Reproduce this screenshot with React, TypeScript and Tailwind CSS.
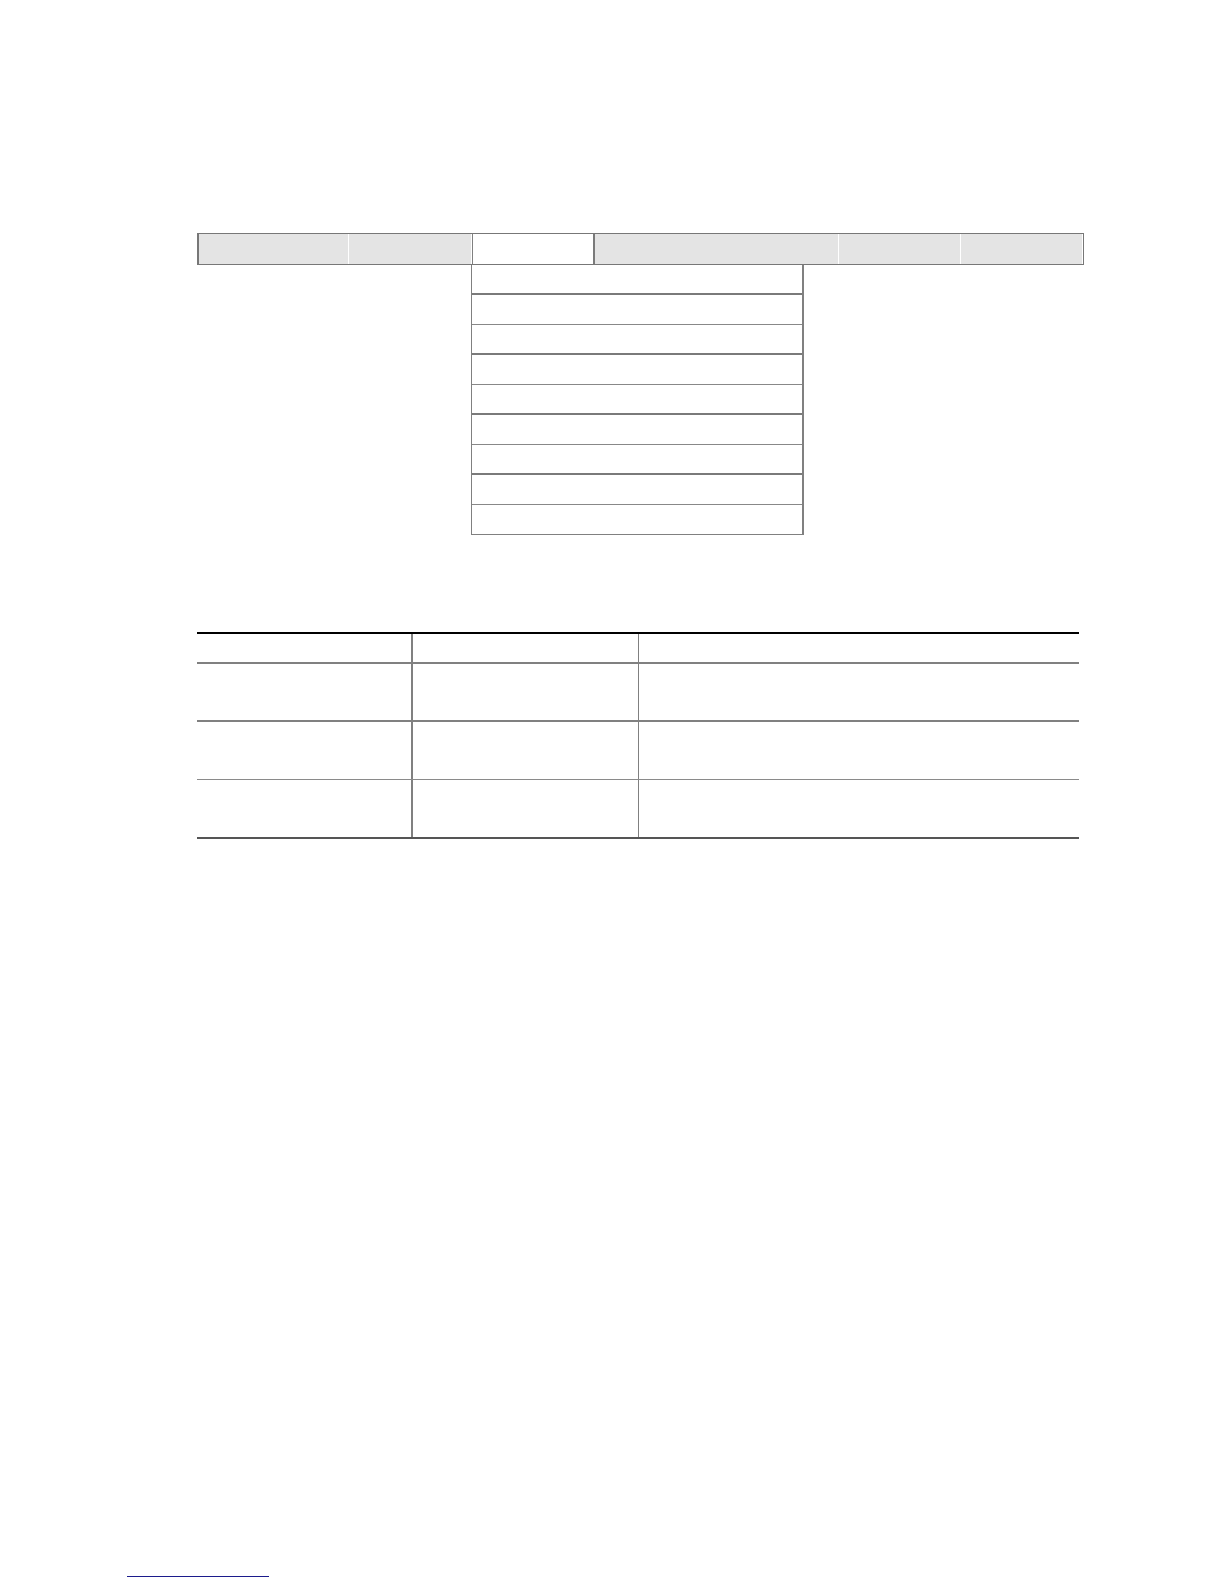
import React from 'react'

const tabs = [
  { w: 'w-[150px]', active: false },
  { w: 'w-[123px]', active: false },
  { w: 'w-[123px]', active: true },
  { w: 'w-[244px]', active: false },
  { w: 'w-[122px]', active: false },
  { w: 'flex-1', active: false },
]

// alternating separator weights seen in the dropdown
const menuRows = [2, 1, 2, 1, 2, 1, 2, 1, 0]

const tableRows = [0, 1, 2]

function MenuBar() {
  return (
    <div className="flex h-[32px] w-[887px] border-l-2 border-y border-[#777777] bg-[#e4e4e4] border-r border-r-[#777777]">
      {tabs.map((t, i) => (
        <div
          key={i}
          className={
            t.active
              ? `${t.w} h-full bg-white border-x-2 border-x-[#7a7a7a] border-l border-l-[#808080]`
              : `${t.w} h-full bg-[#e4e4e4] border-r border-r-white`
          }
        />
      ))}
    </div>
  )
}

function Dropdown() {
  return (
    <div className="ml-[274px] w-[333px] border-l border-r-2 border-[#808080] border-b border-b-[#808080] bg-white">
      {menuRows.map((b, i) => (
        <div
          key={i}
          className={
            b === 2
              ? 'h-[30px] border-b-2 border-[#7a7a7a]'
              : b === 1
              ? 'h-[30px] border-b border-[#888888]'
              : 'h-[29px]'
          }
        />
      ))}
    </div>
  )
}

function SpecTable() {
  return (
    <div className="w-[882px] border-t-2 border-black border-b-2 border-b-[#555555]">
      <div className="flex h-[30px] border-b-2 border-[#808080]">
        <div className="w-[216px] border-r-2 border-[#808080]" />
        <div className="w-[226px] border-r border-[#808080]" />
        <div className="flex-1" />
      </div>
      {tableRows.map((r) => (
        <div
          key={r}
          className={
            r === 0
              ? 'flex h-[58px] border-b-2 border-[#808080]'
              : r === 1
              ? 'flex h-[58px] border-b border-[#8a8a8a]'
              : 'flex h-[57px]'
          }
        >
          <div className="w-[216px] border-r-2 border-[#808080]" />
          <div className="w-[226px] border-r border-[#808080]" />
          <div className="flex-1" />
        </div>
      ))}
    </div>
  )
}

export default function App() {
  return (
    <div className="min-h-[1584px] w-[1224px] bg-white font-['Liberation_Sans',Arial,sans-serif]">
      <div className="pt-[233px] pl-[197px]">
        <MenuBar />
        <Dropdown />
        <div className="mt-[97px]">
          <SpecTable />
        </div>
      </div>
      <a href="#" className="block ml-[127px] mt-[737px] w-[142px] h-px bg-[#1c1c8c]" aria-label="footnote link" />
    </div>
  )
}
